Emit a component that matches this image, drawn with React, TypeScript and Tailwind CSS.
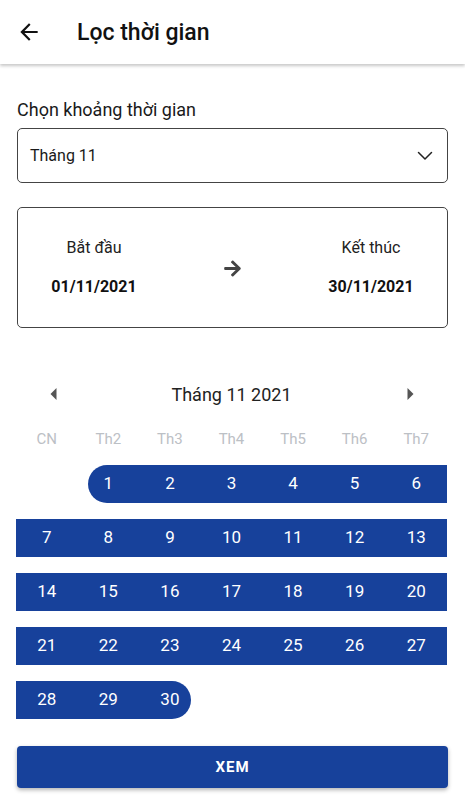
import React from "react";
import { MdArrowBack } from "react-icons/md";
import { FaArrowRight } from "react-icons/fa";

const BLUE = "bg-[#17419b]";

type Cell = { d: number | null; sel: boolean; start?: boolean; end?: boolean };

function buildRows(): Cell[][] {
  const cells: Cell[] = [];
  cells.push({ d: null, sel: false });
  for (let i = 1; i <= 30; i++) cells.push({ d: i, sel: true, start: i === 1, end: i === 30 });
  while (cells.length % 7 !== 0) cells.push({ d: null, sel: false });
  const rows: Cell[][] = [];
  for (let i = 0; i < cells.length; i += 7) rows.push(cells.slice(i, i + 7));
  return rows;
}

export default function App() {
  const rows = buildRows();
  const days = ["CN", "Th2", "Th3", "Th4", "Th5", "Th6", "Th7"];
  return (
    <div className="w-[465px] h-[800px] bg-white overflow-hidden" style={{ fontFamily: "Roboto, 'Noto Sans', sans-serif" }}>
      <div className="h-[64px] flex items-center bg-white shadow-[0_2px_3px_rgba(0,0,0,0.22)] relative z-10">
        <div className="ml-[16px] w-[26px] flex items-center text-[#111]">
          <MdArrowBack size={26} />
        </div>
        <div className="ml-[35px] text-[23px] font-medium text-[#111] leading-none pt-[1px]">Lọc thời gian</div>
      </div>

      <div className="px-[17px]">
        <div className="mt-[36px] text-[18px] leading-[20px] text-[#1a1a1a]">Chọn khoảng thời gian</div>
        <div className="mt-[8px] h-[55px] border border-[#444] rounded-[5px] flex items-center justify-between pl-[12px] pr-[14px]">
          <span className="text-[16px] text-[#1a1a1a]">Tháng 11</span>
          <svg width="16" height="10" viewBox="0 0 16 10" fill="none">
            <path d="M1.5 1.5 L8 8 L14.5 1.5" stroke="#222" strokeWidth="1.5" strokeLinecap="round" strokeLinejoin="round" />
          </svg>
        </div>

        <div className="mt-[24px] h-[121px] border border-[#444] rounded-[5px] flex items-center justify-between px-[16px]">
          <div className="w-[120px] flex flex-col items-center gap-[19px]">
            <span className="text-[16px] leading-[20px] text-[#222]">Bắt đầu</span>
            <span className="text-[16px] leading-[20px] font-bold text-[#111]">01/11/2021</span>
          </div>
          <div className="text-[#444] mt-[1px]">
            <FaArrowRight size={19} />
          </div>
          <div className="w-[120px] flex flex-col items-center gap-[19px]">
            <span className="text-[16px] leading-[20px] text-[#222]">Kết thúc</span>
            <span className="text-[16px] leading-[20px] font-bold text-[#111]">30/11/2021</span>
          </div>
        </div>
      </div>

      <div className="pl-[16px] pr-[18px]">
        <div className="mt-[46px] h-[40px] flex items-center justify-between px-[27px]">
          <div className="w-[20px] flex justify-center">
            <svg width="7" height="12" viewBox="0 0 7 12"><path d="M6.5 0 L0.5 6 L6.5 12 Z" fill="#555" /></svg>
          </div>
          <span className="text-[18px] text-[#222]">Tháng 11 2021</span>
          <div className="w-[20px] flex justify-center">
            <svg width="7" height="12" viewBox="0 0 7 12"><path d="M0.5 0 L6.5 6 L0.5 12 Z" fill="#555" /></svg>
          </div>
        </div>
        <div className="mt-[10px] h-[30px] grid grid-cols-7">
          {days.map((d) => (
            <div key={d} className="flex items-center justify-center text-[15px] text-[#bcc0c5]">{d}</div>
          ))}
        </div>
        <div className="mt-[11px] flex flex-col gap-[16px]">
          {rows.map((row, ri) => (
            <div key={ri} className="grid grid-cols-7 h-[38px]">
              {row.map((c, ci) => {
                if (!c.sel) return <div key={ci} />;
                const cls = c.start
                  ? `${BLUE} ml-[10px] pr-[10px] rounded-l-full`
                  : c.end
                  ? `${BLUE} mr-[10px] pl-[10px] rounded-r-full`
                  : BLUE;
                return (
                  <div key={ci} className={`${cls} h-full flex items-center justify-center text-white text-[17px]`}>
                    {c.d}
                  </div>
                );
              })}
            </div>
          ))}
        </div>
      </div>

      <div className="px-[17px] mt-[27px]">
        <button className={`${BLUE} w-full h-[42px] rounded-[4px] text-white font-bold text-[15px] tracking-[1px] shadow-[0_2px_4px_rgba(0,0,0,0.3)]`}>
          XEM
        </button>
      </div>
    </div>
  );
}
